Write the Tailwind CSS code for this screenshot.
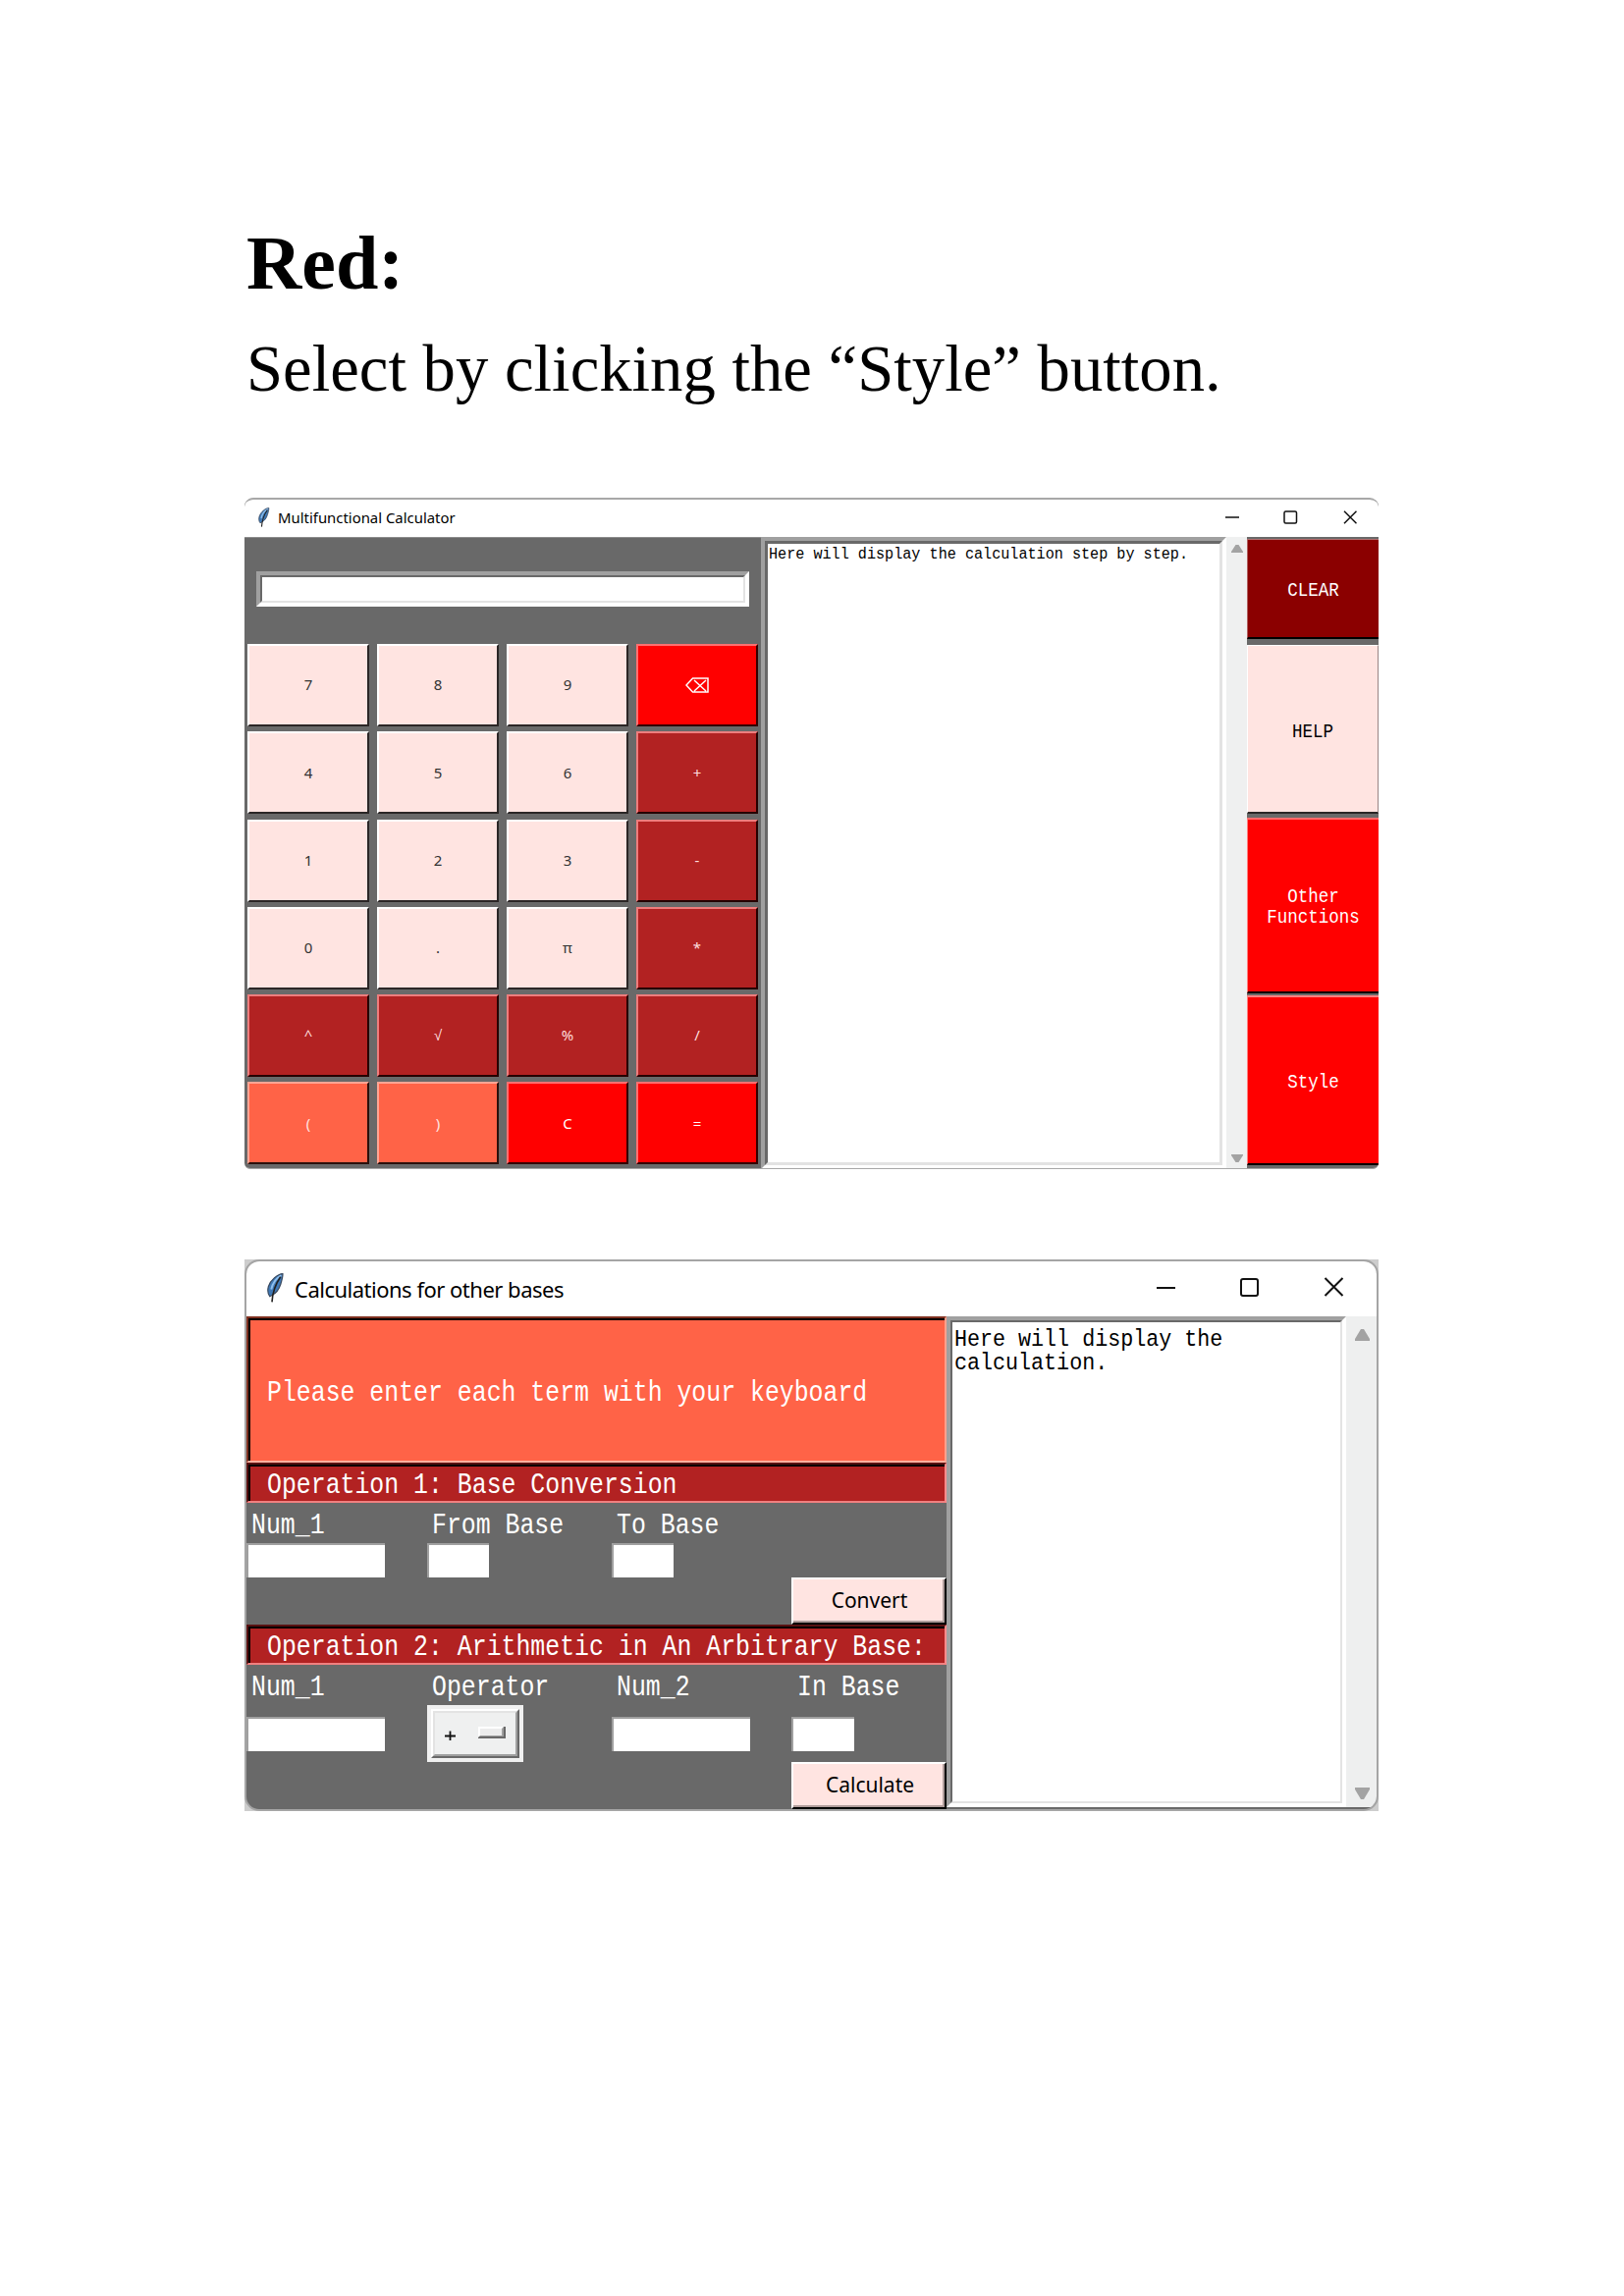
<!DOCTYPE html>
<html lang="en">
<head>
<meta charset="utf-8">
<title>Red style</title>
<script src="https://cdn.jsdelivr.net/npm/@tailwindcss/browser@4"></script>
</head>
<body class="bg-white text-black">
<svg class="hidden">
  <symbol id="feather" viewBox="0 0 12 20">
    <path d="M11.3 .4C8 .6 3 4.500 1.600 9c-.7 2.600-.5 5 .9 6.800L4 15c3-1.500 4.800-4 5.900-7.500C10.800 4.500 11.500 2 11.300.4Z" fill="#3f78b5" stroke="#3a4a60" stroke-width=".8"/>
    <path d="M10.300 1.500C7.500 3 4.500 6.500 3.500 11" stroke="#8fc0ee" stroke-width="1.300" fill="none"/>
    <path d="M9.800 2.500C7 6.500 4.500 11 4 19.600" stroke="#222" stroke-width="1.100" fill="none"/>
  </symbol>
</svg>
<main class="flex h-[2339px] w-[1654px] flex-col pl-[249px] pt-[223px]">
  <h1 class="h-[102px] whitespace-nowrap pl-[2px] font-['Liberation_Serif',serif] text-[78px] leading-[90px] font-bold">Red:</h1>
  <p class="h-[182px] whitespace-nowrap pl-[2px] font-['Liberation_Serif',serif] text-[66.700px] leading-[102px]">Select by clicking the “Style” button.</p>

  <section class="flex h-[684px] w-[1155px] flex-col overflow-hidden rounded-t-[9px] rounded-b-[6px] border-t-2 border-b border-[#a8a8a8] bg-[#696969]">
    <header class="flex h-[38px] shrink-0 items-center bg-white pb-[2px] pl-[13px] pr-[22px]">
      <svg class="h-[20px] w-[13px]"><use href="#feather"/></svg>
      <span class="ml-[8px] flex-1 whitespace-nowrap pt-[1px] font-['Noto_Sans',sans-serif] text-[14.900px]">Multifunctional Calculator</span>
      <svg class="h-[14px] w-[134px]" fill="none" stroke="#111" stroke-width="1.500"><path d="M0 7h14M121 .7l12.500 12.600M133.500.7L121 13.300"/><rect x="60" y="1" width="12.500" height="12" rx="1.500"/></svg>
    </header>
    <div class="flex flex-1">
      <div class="w-[526px] shrink-0 border-t border-[#8c8c8c] pl-[3px]">
        <div class="ml-[9px] mt-[34px] h-[36px] w-[502px] border-4 border-t-[#a0a0a0] border-l-[#a0a0a0] border-r-white border-b-white"><div class="h-full border-2 border-t-[#696969] border-l-[#696969] border-r-[#e3e3e3] border-b-[#e3e3e3] bg-white"></div></div>
        <div id="keys" class="mt-[38px] grid grid-cols-[124px_124px_124px_124px] grid-rows-[84px_84px_84px_84px_84px_84px] gap-x-[8px] gap-y-[5.300px] font-['Noto_Sans',sans-serif] text-[15px]"></div>
      </div>
      <div class="h-[644px] w-[474px] shrink-0 border-4 border-t-[#a0a0a0] border-l-[#a0a0a0] border-r-white border-b-white">
        <div class="h-full border-[3px] border-t-[#696969] border-l-[#696969] border-r-[#e3e3e3] border-b-[#e3e3e3] bg-white"><div class="origin-top scale-y-[1.1] whitespace-nowrap font-['Liberation_Mono',monospace] text-[15.150px] leading-[20px] pl-px">Here will display the calculation step by step.</div></div>
      </div>
      <div class="flex h-[644px] w-[21px] shrink-0 flex-col items-center justify-between bg-[#eff0f0] pt-[8px] pb-[7px]">
        <svg class="h-[8px] w-[12px]" fill="#a3a3a3"><path d="M4.500 0h3L12 7v1H0V7Z"/></svg>
        <svg class="h-[8px] w-[12px]" fill="#a3a3a3"><path d="M4.500 8h3L12 1V0H0v1Z"/></svg>
      </div>
      <div class="flex w-[134px] flex-col pt-[2px] text-center font-['Liberation_Mono',monospace] text-[17.500px] leading-[18px] text-white">
        <div class="flex h-[102px] items-center justify-center border-t border-b-2 border-l border-t-[#b07070] border-l-[#b06060] border-b-black bg-[#8b0000] pt-[2px]"><span class="scale-y-[1.2]">CLEAR</span></div>
        <div class="mt-[6px] flex h-[172px] items-center justify-center border-t border-r border-b-2 border-l border-t-white border-l-white border-r-[#998585] border-b-[#2a2626] bg-[#ffe4e1] pt-[4px] text-black"><span class="scale-y-[1.2]">HELP</span></div>
        <div class="mt-[4px] flex h-[179px] items-center justify-center border-t-2 border-b-2 border-l border-t-[#ff6b6b] border-l-[#ff8080] border-b-black bg-[#ff0000] pt-[2px]"><span class="scale-y-[1.150]">Other<br>Functions</span></div>
        <div class="mt-[2px] flex h-[173px] items-center justify-center border-t-2 border-b-2 border-l border-t-[#ff8080] border-l-[#ff8080] border-b-black bg-[#ff0000] pt-[3px]"><span class="scale-y-[1.2]">Style</span></div>
      </div>
    </div>
  </section>

  <section class="mt-[92px] h-[562px] w-[1155px] bg-[#cdcdcd]">
    <div class="flex h-full flex-col overflow-hidden rounded-[15px] border-2 border-[#a5a5a5] bg-[#696969]">
      <header class="flex h-[56px] shrink-0 items-center bg-white pb-[2px] pl-[20px] pr-[33px]">
        <svg class="h-[30px] w-[18px]"><use href="#feather"/></svg>
        <span class="ml-[11px] flex-1 whitespace-nowrap pt-[2px] font-['Noto_Sans',sans-serif] text-[22px] tracking-[-0.5px]">Calculations for other bases</span>
        <svg class="h-[20px] w-[191px] -translate-y-[1px]" fill="none" stroke="#111" stroke-width="2"><path d="M0 11h19M171.500 1l18 18M189.500 1l-18 18"/><rect x="86" y="2" width="17" height="17" rx="2"/></svg>
      </header>
      <div class="flex flex-1">
        <div class="w-[713px] shrink-0 font-['Liberation_Mono',monospace] text-[24.850px] leading-[28px] text-white">
          <div class="h-[149px] border-2 border-t-[#7f3121] border-l-[#7f3121] border-r-[#ffa08c] border-b-[#ffb09f]"><div class="flex h-full items-center border-t-2 border-l-2 border-black bg-[#ff6347] pl-[17px] pt-[4px] whitespace-nowrap"><span class="scale-y-[1.15]">Please enter each term with your keyboard</span></div></div>
          <div class="h-[41px] border-2 border-t-[#581111] border-l-[#581111] border-r-[#ff8a8a] border-b-[#f08080]"><div class="flex h-full items-center border-t-2 border-l-2 border-black bg-[#b22222] pl-[17px] pt-[3px] whitespace-nowrap"><span class="scale-y-[1.15]">Operation 1: Base Conversion</span></div></div>
          <div class="grid h-[124px] grid-cols-[184px_188px_183px_158px] grid-rows-[41px_35px_48px] items-center">
            <span class="scale-y-[1.15] pl-[5px] pt-[4px]">Num_1</span><span class="scale-y-[1.15] pl-[5px] pt-[4px] whitespace-nowrap">From Base</span><span class="scale-y-[1.15] pl-[5px] pt-[4px]">To Base</span><span></span>
            <div class="h-full w-[141px] border-t-2 border-l-2 border-[#a0a0a0] bg-white"></div><div class="h-full w-[63px] border-t-2 border-l-2 border-[#a0a0a0] bg-white"></div><div class="h-full w-[63px] border-t-2 border-l-2 border-[#a0a0a0] bg-white"></div><span></span>
            <div class="col-start-4 h-full border-2 border-t-white border-l-white border-r-black border-b-black"><div class="flex h-full items-center justify-center border-r-2 border-b-2 border-[#b09d9b] bg-[#ffe4e1] pl-[3px] font-['Noto_Sans',sans-serif] text-[21px] text-black">Convert</div></div>
          </div>
          <div class="h-[41px] border-2 border-t-[#581111] border-l-[#581111] border-r-[#ff8a8a] border-b-[#f08080]"><div class="flex h-full items-center border-t-2 border-l-2 border-black bg-[#b22222] pl-[17px] pt-[3px] whitespace-nowrap"><span class="scale-y-[1.15]">Operation 2: Arithmetic in An Arbitrary Base:</span></div></div>
          <div class="grid h-[147px] grid-cols-[184px_188px_183px_158px] grid-rows-[41px_58px_48px] items-center">
            <span class="scale-y-[1.15] pl-[5px] pt-[5px]">Num_1</span><span class="scale-y-[1.15] pl-[5px] pt-[5px]">Operator</span><span class="scale-y-[1.15] pl-[5px] pt-[5px]">Num_2</span><span class="scale-y-[1.15] pl-[6px] pt-[5px]">In Base</span>
            <div class="h-[35px] w-[141px] border-t-2 border-l-2 border-[#a0a0a0] bg-white"></div>
            <div class="h-[58px] w-[98px] bg-[#f0f0f0] p-[4px]"><div class="h-full border-2 border-t-white border-l-white border-r-[#696969] border-b-[#696969]"><div class="flex h-full items-center border-2 border-t-[#e3e3e3] border-l-[#e3e3e3] border-r-[#a0a0a0] border-b-[#a0a0a0] bg-[#eff0f0] pl-[10px]"><svg class="h-[14px] w-[70px]"><path d="M0 9.500h11M5.500 4.500v10" stroke="#111" stroke-width="1.800"/><path d="M34 0h28v12H34Z" fill="#696969"/><path d="M34 0h26v10H34Z" fill="#a0a0a0"/><path d="M34 0h26l-2 2H36v7l-2 2Z" fill="#fff"/><rect x="36" y="2" width="22" height="7" fill="#ececec"/></svg></div></div></div>
            <div class="h-[35px] w-[141px] border-t-2 border-l-2 border-[#a0a0a0] bg-white"></div>
            <div class="h-[35px] w-[64px] border-t-2 border-l-2 border-[#a0a0a0] bg-white"></div>
            <div class="col-start-4 h-full border-2 border-t-white border-l-white border-r-black border-b-black"><div class="flex h-full items-center justify-center border-r-2 border-b-2 border-[#b09d9b] bg-[#ffe4e1] pl-[4px] font-['Noto_Sans',sans-serif] text-[21px] text-black">Calculate</div></div>
          </div>
        </div>
        <div class="h-[500px] w-[407px] shrink-0 border-4 border-t-[#a0a0a0] border-l-[#a0a0a0] border-r-white border-b-white">
          <div class="h-full border-2 border-t-[#696969] border-l-[#696969] border-r-[#e3e3e3] border-b-[#e3e3e3] bg-white"><div class="origin-top scale-y-[1.12] whitespace-nowrap pl-[2px] pt-[5px] font-['Liberation_Mono',monospace] text-[21.700px] leading-[21.700px]">Here will display the<br>calculation.</div></div>
        </div>
        <div class="flex h-[500px] flex-1 flex-col items-center justify-between bg-[#eeefef] pt-[13px] pb-[8px]">
          <svg class="h-[12px] w-[15px] translate-x-[1px]" fill="#a3a3a3"><path d="M6 0h3l6 10v2H0v-2Z"/></svg>
          <svg class="h-[12px] w-[15px] translate-x-[1px]" fill="#a3a3a3"><path d="M6 12h3l6-10V0H0v2Z"/></svg>
        </div>
      </div>
    </div>
  </section>
</main>
<script>
const tones = {
  pink: 'border-t-white border-l-white border-r-[#2b2626] border-b-[#2b2626] bg-[#ffe4e1] text-[#333]',
  red: 'border-t-[#ff7070] border-l-[#ff7070] border-r-[#300] border-b-[#300] bg-[#ff0000] text-white',
  brick: 'border-t-[#ee7d7d] border-l-[#ee7d7d] border-r-[#250000] border-b-[#250000] bg-[#b22222] text-[#ffdede]',
  tomato: 'border-t-[#ffa594] border-l-[#ffa594] border-r-[#2a100c] border-b-[#2a100c] bg-[#ff6347] text-[#ffe4e1]'
};
const erase = '<svg class="h-[16px] w-[24px]" fill="none" stroke="#fff" stroke-width="1.500"><path d="M7.500 1H23v14H7.500L1 8ZM9 3l12 11M21 3L9 14"/></svg>';
const keys = [
  ['7','pink'],['8','pink'],['9','pink'],[erase,'red'],
  ['4','pink'],['5','pink'],['6','pink'],['+','brick'],
  ['1','pink'],['2','pink'],['3','pink'],['-','brick'],
  ['0','pink'],['.','pink'],['π','pink'],['*','brick'],
  ['^','brick'],['√','brick'],['%','brick'],['/','brick'],
  ['(','tomato'],[')','tomato'],['C','red'],['=','red']
];
document.getElementById('keys').innerHTML = keys.map(([label, tone]) =>
  `<div class="flex items-center justify-center border-2 pb-[1px] ${tones[tone]}">${label}</div>`).join('');
</script>
</body>
</html>
